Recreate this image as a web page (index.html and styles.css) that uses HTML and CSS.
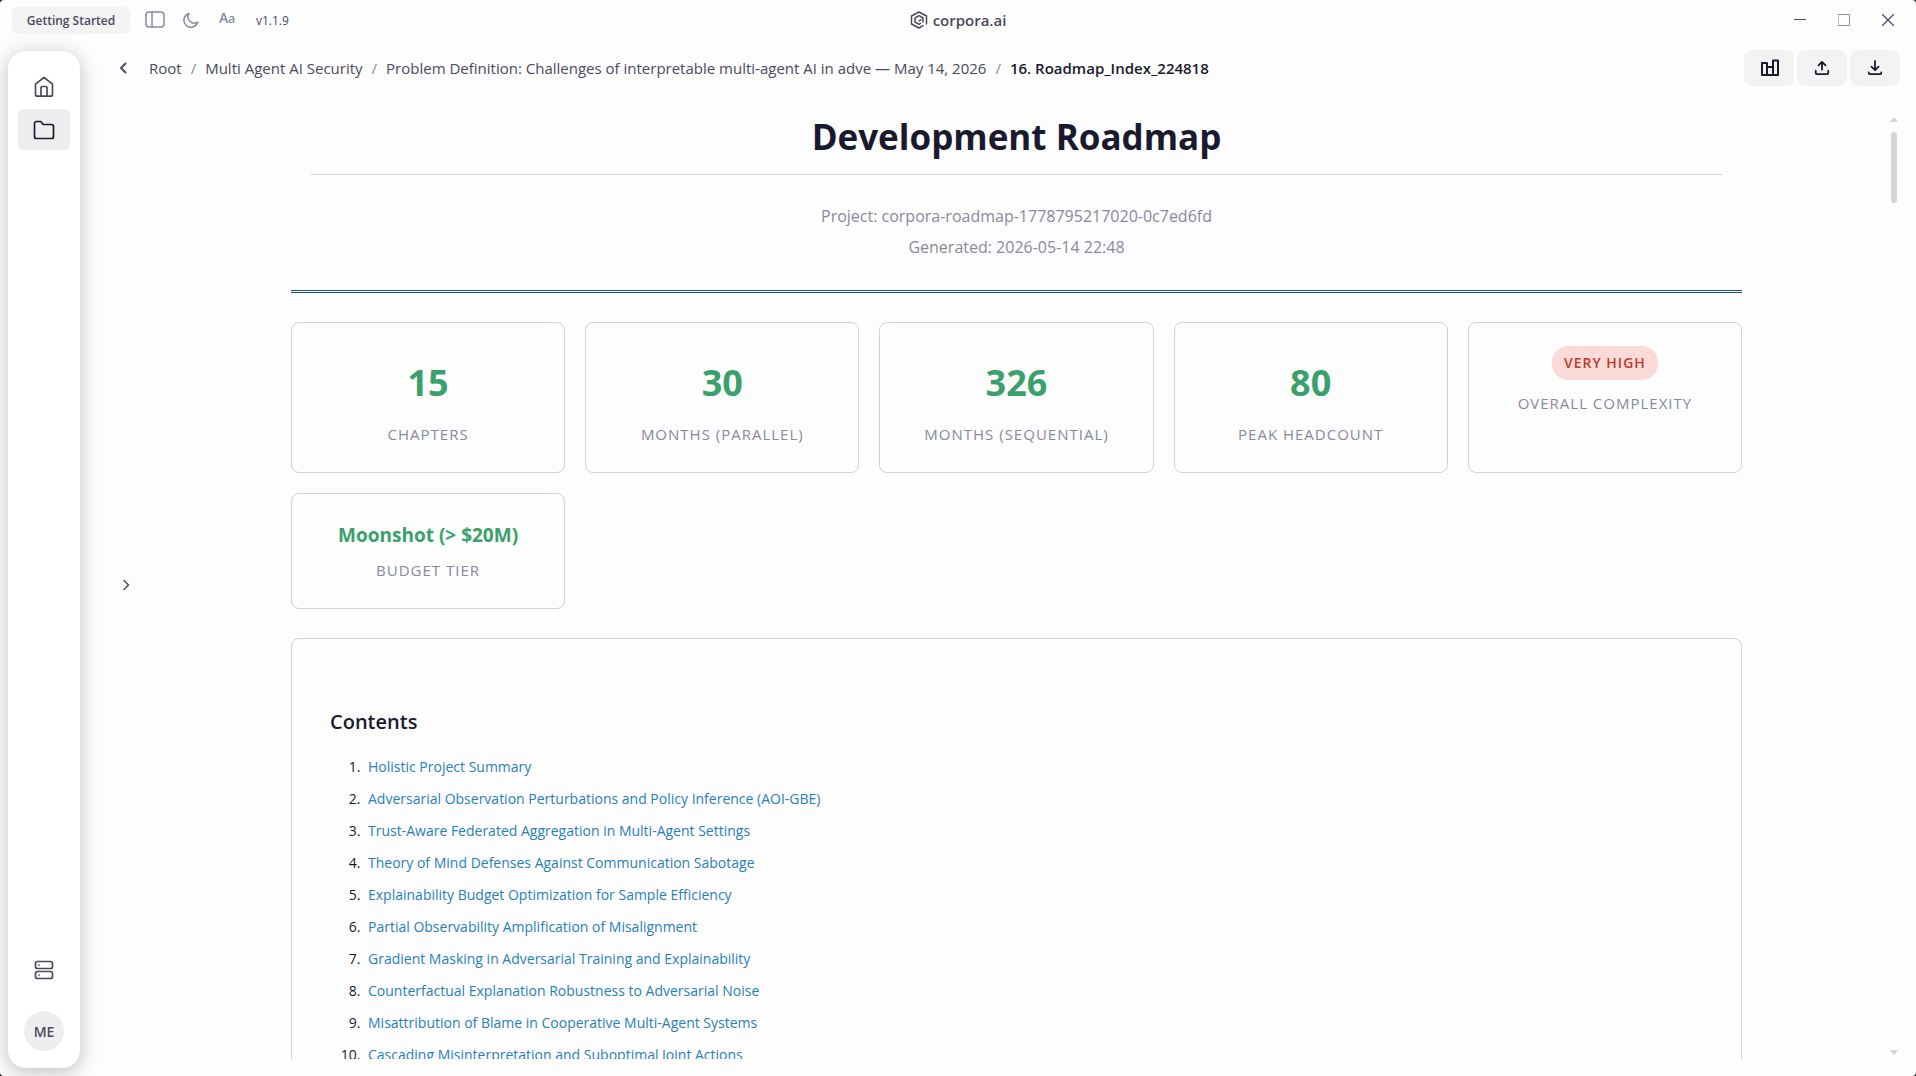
FILE: index.html
```html
<!DOCTYPE html>
<html lang="en">
<head>
    <meta charset="UTF-8">
    <meta name="viewport" content="width=device-width, initial-scale=1.0">
    <title>corpora.ai</title>
    <link rel="stylesheet" href="styles.css">
</head>
<body>
    <div class="app">
        <header class="titlebar">
            <div class="title-left">
                <button class="getting-started">Getting Started</button>
                <button class="tool" aria-label="Toggle panel">
                    <svg width="20" height="18" viewBox="0 0 20 18"><rect x="1" y="1" width="18" height="15" rx="3"/><path d="M7 1v15"/></svg>
                </button>
                <button class="tool" aria-label="Dark mode">
                    <svg width="16" height="16" viewBox="0 0 16 16"><path d="M6 1.5A7 7 0 1 0 14.7 10 6.2 6.2 0 0 1 6 1.5z"/></svg>
                </button>
                <button class="tool font-size" aria-label="Font size">A<small>a</small></button>
                <span class="version">v1.1.9</span>
            </div>
            <div class="brand">
                <svg width="18" height="18" viewBox="0 0 18 18"><path d="M16.5 13V5L9 1 1.5 5v8L9 17l4-2.300M13 11V7L9 4.700 5 7v4l4 2.300 1.500-1M9 9.800l2-1"/></svg>
                <span>corpora.ai</span>
            </div>
            <div class="window-controls">
                <button aria-label="Minimize"><svg width="12" height="12" viewBox="0 0 12 12"><path d="M0 5.5h12"/></svg></button>
                <button aria-label="Maximize"><svg width="12" height="12" viewBox="0 0 12 12"><path class="thin" d="M.5.5h11v11H.5z"/></svg></button>
                <button aria-label="Close"><svg width="12" height="12" viewBox="0 0 12 12"><path d="M.5.5l11 11M11.5.5l-11 11"/></svg></button>
            </div>
        </header>

        <div class="body">
            <nav class="sidebar">
                <button class="nav-btn" aria-label="Home">
                    <svg width="22" height="22" viewBox="0 0 22 22"><path d="M2.5 8.200L11 1.500l8.500 6.700v10a2 2 0 0 1-2 2h-13a2 2 0 0 1-2-2zM8 20v-8.500a1 1 0 0 1 1-1h4a1 1 0 0 1 1 1V20"/></svg>
                </button>
                <button class="nav-btn active" aria-label="Folders">
                    <svg width="22" height="22" viewBox="0 0 22 22"><path d="M1.500 4.500a2 2 0 0 1 2-2h4.300l2.400 3h8.300a2 2 0 0 1 2 2v10a2 2 0 0 1-2 2h-15a2 2 0 0 1-2-2z"/></svg>
                </button>
                <span class="spacer"></span>
                <button class="nav-btn" aria-label="Servers">
                    <svg width="20" height="20" viewBox="0 0 20 20"><rect x="1.500" y="1.500" width="17" height="7" rx="2"/><rect x="1.500" y="11.500" width="17" height="7" rx="2"/><path d="M5 5h.1M5 15h.1"/></svg>
                </button>
                <button class="avatar">ME</button>
            </nav>

            <main class="main">
                <div class="topbar">
                    <button class="back" aria-label="Back"><svg width="12" height="14" viewBox="0 0 12 14"><path d="M8.500 2.500L4 7l4.500 4.500"/></svg></button>
                    <nav class="breadcrumb">
                        <a href="#">Root</a><span>/</span>
                        <a href="#">Multi Agent AI Security</a><span>/</span>
                        <a href="#">Problem Definition: Challenges of interpretable multi-agent AI in adve — May 14, 2026</a><span>/</span>
                        <strong>16. Roadmap_Index_224818</strong>
                    </nav>
                    <div class="actions">
                        <button aria-label="Statistics"><svg width="20" height="18" viewBox="0 0 20 18"><path d="M3 4h5v12H3zM8 8h6v8H8zM14 1.500h5V16h-5z"/></svg></button>
                        <button aria-label="Upload"><svg width="16" height="16" viewBox="0 0 18 18"><path d="M9 11V2M5 6l4-4 4 4M2 12v3a1 1 0 0 0 1 1h12a1 1 0 0 0 1-1v-3"/></svg></button>
                        <button aria-label="Download"><svg width="16" height="16" viewBox="0 0 18 18"><path d="M9 1v10M5 7.500l4 4 4-4M2 14v1a1 1 0 0 0 1 1h12a1 1 0 0 0 1-1v-1"/></svg></button>
                    </div>
                </div>

                <div class="viewer">
                    <div class="drawer">
                        <button aria-label="Open drawer"><svg width="12" height="14" viewBox="0 0 12 14"><path d="M4 2.500L8.500 7 4 11.500"/></svg></button>
                    </div>
                    <article class="document">
                        <header class="doc-header">
                            <h1>Development Roadmap</h1>
                            <p>Project: corpora-roadmap-1778795217020-0c7ed6fd</p>
                            <p>Generated: 2026-05-14 22:48</p>
                        </header>

                        <section class="stats">
                            <div class="card"><div class="value">15</div><div class="label">Chapters</div></div>
                            <div class="card"><div class="value">30</div><div class="label">Months (Parallel)</div></div>
                            <div class="card"><div class="value">326</div><div class="label">Months (Sequential)</div></div>
                            <div class="card"><div class="value">80</div><div class="label">Peak Headcount</div></div>
                            <div class="card"><div class="badge">Very High</div><div class="label">Overall Complexity</div></div>
                            <div class="card"><div class="value small">Moonshot (&gt; $20M)</div><div class="label">Budget Tier</div></div>
                        </section>

                        <section class="toc">
                            <h2>Contents</h2>
                            <ol>
                                <li><a href="#">Holistic Project Summary</a></li>
                                <li><a href="#">Adversarial Observation Perturbations and Policy Inference (AOI-GBE)</a></li>
                                <li><a href="#">Trust-Aware Federated Aggregation in Multi-Agent Settings</a></li>
                                <li><a href="#">Theory of Mind Defenses Against Communication Sabotage</a></li>
                                <li><a href="#">Explainability Budget Optimization for Sample Efficiency</a></li>
                                <li><a href="#">Partial Observability Amplification of Misalignment</a></li>
                                <li><a href="#">Gradient Masking in Adversarial Training and Explainability</a></li>
                                <li><a href="#">Counterfactual Explanation Robustness to Adversarial Noise</a></li>
                                <li><a href="#">Misattribution of Blame in Cooperative Multi-Agent Systems</a></li>
                                <li><a href="#">Cascading Misinterpretation and Suboptimal Joint Actions</a></li>
                            </ol>
                        </section>
                    </article>
                    <div class="scrollbar">
                        <span class="arrow up"></span>
                        <span class="thumb"></span>
                        <span class="arrow down"></span>
                    </div>
                </div>
            </main>
        </div>
    </div>
</body>
</html>
```

FILE: styles.css
```css
*{
    margin: 0;
    padding: 0;
    box-sizing: border-box;
}
html{
    background-color: #222;
}
body{
    font-family: "Open Sans", "Noto Sans", sans-serif;
    font-size: 15px;
    color: #1a1a2e;
}
button{
    border: none;
    background: none;
    font: inherit;
    color: inherit;
    display: flex;
    align-items: center;
    justify-content: center;
}
a{
    color: inherit;
    text-decoration: none;
}
svg{
    fill: none;
    stroke: currentColor;
    stroke-width: 2;
    stroke-linecap: round;
    stroke-linejoin: round;
}
.app{
    height: 100vh;
    display: flex;
    flex-direction: column;
    background-color: #fdfdfd;
    border-radius: 4px;
    overflow: hidden;
}

/* title bar */
.titlebar{
    height: 40px;
    padding: 0 12px;
    display: grid;
    grid-template-columns: 1fr auto 1fr;
    align-items: center;
    color: #4a4a5e;
}
.title-left{
    display: flex;
    align-items: center;
}
.getting-started{
    width: 118px;
    height: 27px;
    margin-right: 14px;
    border-radius: 6px;
    background-color: #f3f3f3;
    font-size: 12px;
    font-weight: 600;
}
.tool{
    width: 22px;
    height: 24px;
    margin-right: 14px;
    color: #8888a8;
}
.tool svg{
    stroke-width: 1.5;
}
.font-size{
    align-items: baseline;
    font-size: 14px;
    font-weight: 600;
}
.font-size small{
    font-size: 12px;
}
.version{
    margin-left: 4px;
    font-size: 12px;
}
.brand{
    display: flex;
    align-items: center;
    gap: 5px;
    font-weight: 600;
}
.brand svg{
    stroke-width: 1.5;
}
.window-controls{
    padding-right: 8px;
    display: flex;
    justify-content: flex-end;
    gap: 28px;
}
.window-controls button{
    width: 16px;
    height: 24px;
}
.window-controls svg{
    stroke-width: 1.2;
}
.window-controls .thin{
    stroke-width: 1;
    stroke: #8888a8;
}

.body{
    flex: 1;
    min-height: 0;
    display: flex;
}

/* sidebar */
.sidebar{
    width: 72px;
    margin: 11px 8px 8px;
    padding: 15px 0 17px;
    display: flex;
    flex-direction: column;
    align-items: center;
    gap: 2px;
    border-radius: 18px;
    background-color: #fff;
    box-shadow: 0 4px 20px rgba(0, 0, 0, 0.25);
    color: #4a4a5e;
}
.nav-btn{
    width: 52px;
    height: 41px;
    border-radius: 6px;
}
.nav-btn svg{
    stroke-width: 1.7;
}
.nav-btn.active{
    background-color: #eee;
    color: #1a1a2e;
}
.spacer{
    flex: 1;
}
.avatar{
    width: 40px;
    height: 40px;
    margin-top: 19px;
    border-radius: 50%;
    background-color: #eee;
    font-size: 14px;
    font-weight: 600;
}

/* breadcrumb and actions */
.main{
    flex: 1;
    min-width: 0;
    padding: 10px 16px 17px 0;
    display: flex;
    flex-direction: column;
}
.topbar{
    height: 36px;
    display: flex;
    align-items: center;
    color: #4a4a5e;
}
.back{
    width: 28px;
    height: 28px;
    margin: 0 12px 0 21px;
}
.breadcrumb{
    flex: 1;
    display: flex;
    align-items: center;
    white-space: nowrap;
}
.breadcrumb span{
    margin: 0 9px;
    color: #8888a0;
}
.breadcrumb strong{
    font-weight: 600;
    color: #1a1a2e;
}
.actions{
    display: flex;
    gap: 3px;
}
.actions button{
    width: 50px;
    height: 36px;
    border-radius: 8px;
    background-color: #f3f3f3;
    color: #1a1a2e;
}

.viewer{
    flex: 1;
    min-height: 0;
    display: flex;
    padding-top: 20px;
}
.drawer{
    width: 57px;
    padding: 4px 0 0 24px;
    display: flex;
    align-items: center;
    color: #4a4a5e;
}
.drawer button{
    width: 28px;
    height: 40px;
}
.drawer svg{
    stroke-width: 1.5;
}

/* document */
.document{
    flex: 1;
    min-width: 0;
    padding: 0 146px;
    overflow: hidden;
}
.doc-header{
    padding-bottom: 27px;
    border-bottom: 3px double #1a5276;
    text-align: center;
    color: #8888a0;
}
.doc-header h1{
    margin: 0 20px 26px;
    padding: 2px 0 8px;
    border-bottom: 1px solid #d0d0d8;
    font-size: 35px;
    line-height: 58px;
    color: #1a1a2e;
}
.doc-header p{
    font-size: 16px;
    line-height: 31px;
}
.stats{
    margin: 29px 0;
    display: grid;
    grid-template-columns: repeat(5, 1fr);
    gap: 20px;
}
.card{
    padding: 23px;
    border: 1px solid #d0d0de;
    border-radius: 8px;
    text-align: center;
}
.value{
    font-size: 36px;
    font-weight: 700;
    line-height: 74px;
    color: #3aa06c;
}
.value.small{
    margin-bottom: 3px;
    font-size: 19px;
    line-height: 36px;
}
.label{
    font-size: 15px;
    line-height: 29px;
    letter-spacing: 1px;
    text-transform: uppercase;
    color: #8888a0;
}
.badge{
    display: inline-block;
    margin-bottom: 9px;
    padding: 0 12px;
    border-radius: 16px;
    background-color: #fadbd8;
    font-size: 14px;
    font-weight: 600;
    line-height: 34px;
    letter-spacing: 1px;
    text-transform: uppercase;
    color: #c0392b;
}
.toc{
    padding: 61px 38px;
    border: 1px solid #d0d0de;
    border-radius: 8px;
}
.toc h2{
    font-size: 20px;
    font-weight: 600;
    line-height: 44px;
    margin-bottom: 7px;
}
.toc ol{
    padding-left: 34px;
    font-size: 14px;
}
.toc li{
    padding-left: 4px;
    line-height: 32px;
}
.toc a{
    color: #2980b9;
}

/* scrollbar */
.scrollbar{
    width: 12px;
    padding-top: 11px;
    display: flex;
    flex-direction: column;
    align-items: center;
}
.arrow{
    border: 4px solid transparent;
}
.arrow.up{
    border-top: none;
    border-bottom: 5px solid #d4d4d4;
}
.arrow.down{
    margin-top: auto;
    margin-bottom: 4px;
    border-bottom: none;
    border-top: 5px solid #d4d4d4;
}
.thumb{
    width: 6px;
    height: 71px;
    margin-top: 10px;
    border-radius: 3px;
    background-color: #d4d4d4;
}
```
